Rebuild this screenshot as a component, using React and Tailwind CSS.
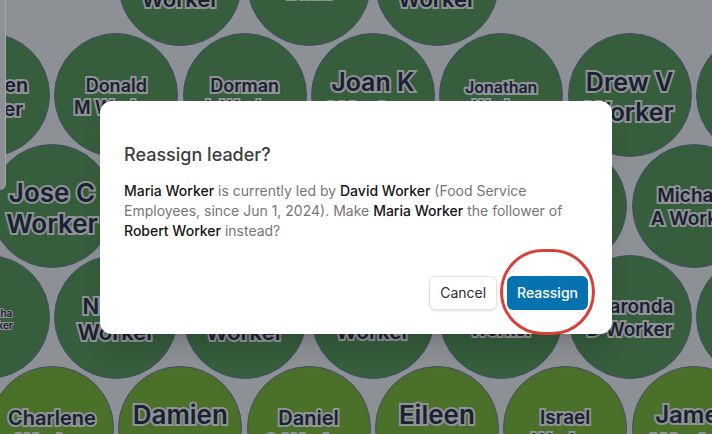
import React from "react";

const SP = 128.3;
const ROWS = [
  { y: -16, x0: 52, items: [null, ["Alan", "Worker", "text-[22px]"], ["Carl R", "Worker", "text-[14px]"], ["Ellen", "Worker", "text-[22px]"]] },
  { y: 95, x0: -12, items: [["Stephen", "Worker", "text-[20px]"], ["Donald", "M Worker", "text-[18px]"], ["Dorman", "L Worker", "text-[18px]"], ["Joan K", "Worker", "text-[25px]"], ["Jonathan", "Worker", "text-[16px]"], ["Drew V", "Worker", "text-[25px]"], ["Gary", "Worker", "text-[20px]"]] },
  { y: 206, x0: 52, items: [["Jose C", "Worker", "text-[26px]"], ["Kevin", "Worker", "text-[20px]"], ["Linda", "Worker", "text-[20px]"], ["Mark", "Worker", "text-[20px]"], ["Nora", "Worker", "text-[20px]"], ["Michael", "A Worker", "text-[19px]"]] },
  { y: 317, x0: -12, items: [["Samantha", "Jo Worker", "text-[10px]"], ["Nicole", "Worker", "text-[22px]"], ["Peter", "Worker", "text-[22px]"], ["Ruth", "Worker", "text-[21px]"], ["Henry", "Worker", "text-[18px]"], ["Sharonda", "D Worker", "text-[19px]"], ["Oscar", "Worker", "text-[20px]"]] },
  { y: 428, x0: 52, light: true, items: [["Charlene", "Worker", "text-[20px]"], ["Damien", "Worker", "text-[26px]"], ["Daniel", "O Worker", "text-[20px]"], ["Eileen", "Worker", "text-[26px]"], ["Israel", "Worker", "text-[19px]"], ["James", "Worker", "text-[24px]"]] },
];

function Bubble({ cx, cy, item, light }) {
  const [a, b, size] = item;
  const small = size === "text-[10px]";
  return (
    <div
      className={`absolute w-[124px] h-[124px] rounded-full border border-[#42506a] flex flex-col items-center justify-center text-center pt-1 ${light ? "bg-[#4a7029]" : "bg-[#365d3c]"}`}
      style={{ left: cx - 62, top: cy - 62 }}
    >
      <div
        className={`${size} font-semibold leading-[1.2] text-[#1a2130] [paint-order:stroke_fill] ${small ? "[-webkit-text-stroke:2px_#8f9297]" : "[-webkit-text-stroke:4px_#8f9297]"}`}
      >
        <div>{a}</div>
        <div>{b}</div>
      </div>
    </div>
  );
}

export default function App() {
  return (
    <div className="relative w-[712px] h-[434px] overflow-hidden bg-[#8d9094] font-['Inter',sans-serif]">
      {ROWS.map((row, ri) =>
        row.items.map((item, k) =>
          item ? (
            <Bubble key={`${ri}-${k}`} cx={row.x0 + SP * k} cy={row.y} item={item} light={row.light} />
          ) : null
        )
      )}
      <div className="absolute left-0 top-0 w-[6px] h-[190px] bg-[#8d9094] border-r border-[#a3a6aa] rounded-br-md" />

      <div className="absolute inset-0 flex items-center justify-center">
        <div className="w-[512px] rounded-xl bg-white px-6 pt-10 pb-6 shadow-xl">
          <h2 className="text-lg leading-7 font-medium text-[#3d3d3d]">Reassign leader?</h2>
          <p className="mt-3 text-sm leading-5 text-[#767676]">
            <span className="font-medium text-[#161616]">Maria Worker</span> is currently led by{" "}
            <span className="font-medium text-[#161616]">David Worker</span> (Food Service Employees, since Jun 1, 2024). Make{" "}
            <span className="font-medium text-[#161616]">Maria Worker</span> the follower of{" "}
            <span className="font-medium text-[#161616]">Robert Worker</span> instead?
          </p>
          <div className="mt-[35px] flex justify-end gap-2.5">
            <button className="h-[34px] px-[10px] rounded-md border border-[#e3e3e3] bg-white text-sm text-[#2e2e2e] shadow-sm">
              Cancel
            </button>
            <div className="relative">
              <button className="h-[34px] px-[10px] rounded-md bg-[#0772b0] text-sm font-medium text-white">
                Reassign
              </button>
              <div className="pointer-events-none absolute left-[-7px] top-[-27px] w-[95px] h-[86px] rounded-full border-[3px] border-[#d6423a]" />
            </div>
          </div>
        </div>
      </div>
    </div>
  );
}
